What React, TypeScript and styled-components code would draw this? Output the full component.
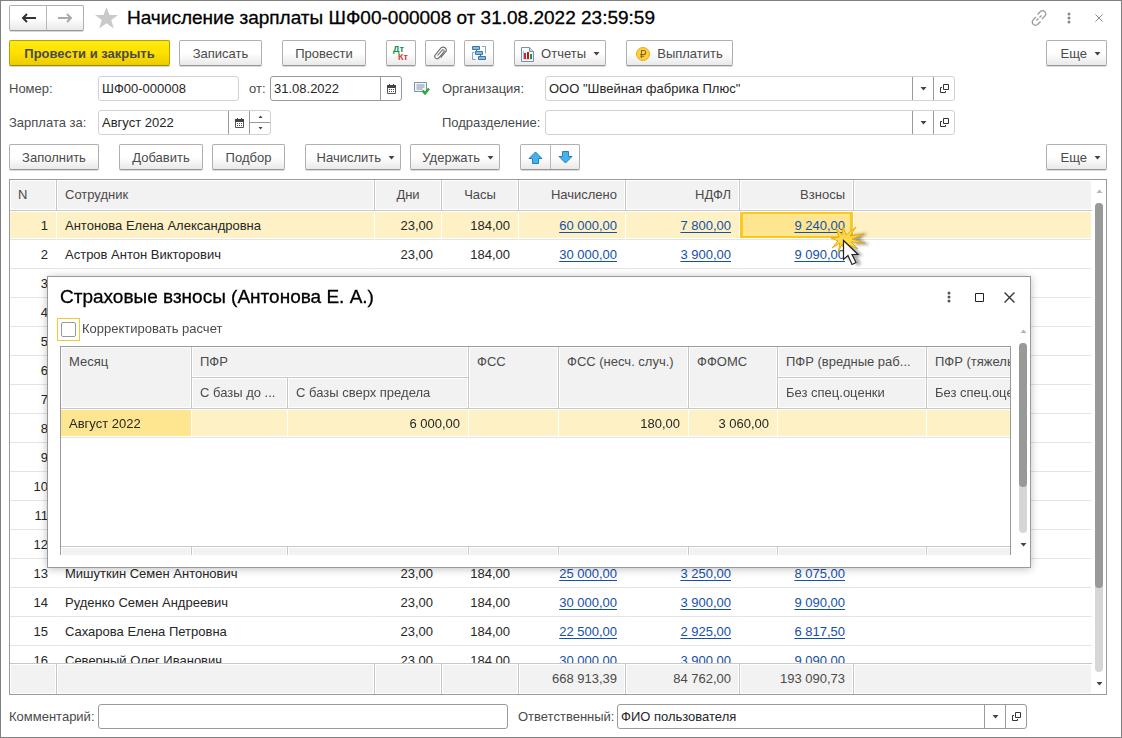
import React from "react";
import styled, { createGlobalStyle, css } from "styled-components";

const Global = createGlobalStyle`
  *, *::before, *::after { box-sizing: border-box; }
  body { margin: 0; background: #fff; }
  body, button, input, table { font-family: "Liberation Sans", Arial, sans-serif; font-size: 13px; line-height: 16px; color: #4a4a4a; }
`;

const Window = styled.main`
  position: relative;
  display: flex;
  flex-direction: column;
  height: 100vh;
  min-height: 600px;
  padding: 4px 14px 8px 8px;
  border: 1px solid #808080;
  background: #fff;
`;

const TitleBar = styled.header`
  display: flex;
  align-items: center;
  height: 26px;
  margin-right: -7px;
`;

const buttonFace = css`
  border: 1px solid #b0b0b0;
  border-bottom-color: #989898;
  border-radius: 2px;
  background: linear-gradient(#fff, #fff 50%, #e9e9e9);
  box-shadow: 0 1px 0 #d8d8d8;
`;

const ButtonGroup = styled.div<{ $gap?: boolean }>`
  ${buttonFace}
  display: flex;
  flex: none;
  height: 26px;
  overflow: hidden;
  margin-left: ${(p) => (p.$gap ? "11px" : "0")};
`;

const GroupButton = styled.button<{ $w: number }>`
  display: flex;
  align-items: center;
  justify-content: center;
  width: ${(p) => p.$w}px;
  padding: 0;
  border: 0;
  background: none;
  & + & { border-left: 1px solid #b8b8b8; }
`;

const Title = styled.h1`
  flex: 1;
  margin: 0;
  font-size: 19px;
  line-height: 24px;
  font-weight: 400;
  color: #000;
  -webkit-text-stroke: 0.3px #000;
  white-space: nowrap;
`;

const StarButton = styled.button`
  display: flex;
  padding: 0;
  margin: 0 9px 0 11px;
  border: 0;
  background: none;
`;

const Tools = styled.div`
  display: flex;
  align-items: center;
`;

const ToolButton = styled.button`
  display: flex;
  align-items: center;
  justify-content: center;
  width: 30px;
  height: 24px;
  padding: 0;
  border: 0;
  background: none;
`;

const Toolbar = styled.div`
  display: flex;
  gap: 9px;
  height: 27px;
  flex: none;
  margin-top: 9px;
`;

const Button = styled.button<{ $w: number; $primary?: boolean; $gap?: boolean; $end?: boolean; $menu?: boolean }>`
  ${buttonFace}
  display: flex;
  align-items: center;
  justify-content: ${(p) => (p.$menu ? "flex-end" : "center")};
  gap: 7px;
  flex: none;
  width: ${(p) => p.$w}px;
  height: 26px;
  padding: ${(p) => (p.$menu ? "2px 5px 0 0" : "2px 0 0")};
  white-space: nowrap;
  margin-left: ${(p) => (p.$end ? "auto" : p.$gap ? "11px" : "0")};
  ${(p) =>
    p.$primary &&
    css`
      font-weight: 700;
      border-color: #b8a000;
      border-bottom-color: #a08a00;
      background: linear-gradient(#ffea10, #ffe000 50%, #ebcc00);
    `}
`;

const IconButton = styled(Button)`
  padding: 0;
`;

const Form = styled.div`
  display: grid;
  grid-template-columns: 89px 304px 40px 103px minmax(200px, 410px);
  grid-auto-rows: 25px;
  row-gap: 9px;
  align-items: center;
  margin-top: 9px;
`;

const Label = styled.label<{ $col?: number }>`
  white-space: nowrap;
  ${(p) => p.$col && `grid-column: ${p.$col};`}
`;

const Group = styled.div<{ $center?: boolean }>`
  display: flex;
  align-items: center;
  justify-content: ${(p) => (p.$center ? "center" : "flex-start")};
`;

const Field = styled.div<{ $w?: number; $dark?: boolean }>`
  display: flex;
  height: 25px;
  ${(p) => (p.$w ? `flex: 0 1 ${p.$w}px; width: ${p.$w}px;` : "")}
  min-width: 0;
  border: 1px solid ${(p) => (p.$dark ? "#9a9a9a" : "#d2d2d2")};
  border-radius: 3px;
  background: #fff;
`;

const Input = styled.input`
  flex: 1;
  min-width: 0;
  width: 100%;
  padding: 0 3px;
  border: 0;
  outline: 0;
  background: none;
  color: #262626;
`;

const FieldButton = styled.button`
  display: flex;
  align-items: center;
  justify-content: center;
  flex: none;
  width: 21px;
  padding: 0;
  border: 0;
  border-left: 1px solid #9a9a9a;
  background: none;
`;

const Spinner = styled.div`
  display: flex;
  flex-direction: column;
  flex: none;
  width: 21px;
  border-left: 1px solid #9a9a9a;
`;

const SpinButton = styled.button`
  display: flex;
  align-items: center;
  justify-content: center;
  flex: 1;
  padding: 0;
  border: 0;
  background: none;
  & + & { border-top: 1px solid #9a9a9a; }
`;

const Grid = styled.section`
  display: flex;
  flex: 1;
  min-height: 0;
  margin-top: 8px;
  border: 1px solid #9a9a9a;
`;

const GridView = styled.div`
  flex: 1;
  min-width: 0;
  overflow: hidden;
`;

const Table = styled.table`
  width: 100%;
  border-collapse: separate;
  border-spacing: 0;
  table-layout: fixed;
  thead { position: sticky; top: 0; z-index: 1; }
  tfoot { position: sticky; bottom: 0; z-index: 1; }
`;

const Col = styled.col<{ $w?: number }>`
  ${(p) => p.$w && `width: ${p.$w}px;`}
`;

type CellProps = { $align?: "left" | "right" | "center" };

const panel = css<CellProps>`
  padding: 0 8px;
  overflow: hidden;
  white-space: nowrap;
  text-align: ${(p) => p.$align ?? "left"};
  font-weight: 400;
  color: #4a4a4a;
  background: #f2f2f2;
  border-right: 1px solid #c8c8c8;
  box-shadow: inset 0 0 0 1px #fff;
  &:last-child { border-right: 0; }
`;

const HeadCell = styled.th<CellProps & { $top?: boolean }>`
  ${panel}
  height: 31px;
  border-bottom: 1px solid #c8c8c8;
  ${(p) => p.$top && "vertical-align: top; padding-top: 7px;"}
`;

const FootCell = styled.td<CellProps>`
  ${panel}
  height: 31px;
  border-top: 1px solid #c8c8c8;
`;

const Row = styled.tr<{ $selected?: boolean }>`
  td {
    background: ${(p) => (p.$selected ? "#fdf1c5" : "#fff")};
    box-shadow: inset 0 1px #fff, inset 0 -1px #fff;
  }
`;

const Cell = styled.td<CellProps>`
  height: 29px;
  padding: 2px 8px 0;
  color: #262626;
  white-space: nowrap;
  text-align: ${(p) => p.$align ?? "left"};
  border-right: 1px solid #fff;
  border-bottom: 1px solid #e4e4e4;
`;

const ActiveCell = styled(Cell)`
  position: relative;
  && {
    background: #fee590;
    box-shadow: inset 0 1px #fff, inset 0 -1px #fff, inset 0 0 0 3px #fbc81e;
  }
`;

const MonthCell = styled(Cell)`
  && { background: #fee590; }
`;

const Link = styled.a`
  color: #1450aa;
  text-decoration: underline;
  text-underline-offset: 2px;
`;

const Pointer = styled.svg`
  position: absolute;
  left: 80px;
  top: 4px;
  z-index: 1;
  pointer-events: none;
`;

const ScrollBar = styled.div`
  display: flex;
  flex-direction: column;
  align-items: center;
  flex: none;
  width: 14px;
  padding: 9px 0 8px;
  gap: 10px;
`;

const Track = styled.div`
  flex: 1;
  width: 8px;
  border-radius: 4px;
  background: #d6d6d6;
`;

const Thumb = styled.div<{ $h: number }>`
  width: 8px;
  height: ${(p) => p.$h}%;
  border-radius: 4px;
  background: #999;
`;

const Footer = styled.footer`
  display: flex;
  align-items: center;
  margin-top: 9px;
`;

const SideLabel = styled(Label)<{ $w: number; $pad?: number }>`
  flex: none;
  width: ${(p) => p.$w}px;
  padding-left: ${(p) => p.$pad ?? 0}px;
`;

const Dialog = styled.section`
  position: absolute;
  z-index: 2;
  left: 46px;
  right: 90px;
  top: 275px;
  padding: 8px 0 12px 12px;
  border: 1px solid #999;
  background: #fff;
  box-shadow: 0 1px 8px rgba(0, 0, 0, 0.25);
`;

const DialogHead = styled.header`
  display: flex;
  align-items: center;
  padding-right: 6px;
`;

const DialogTitle = styled(Title).attrs({ as: "h2" })``;

const DialogMain = styled.div`
  display: flex;
  gap: 5px;
`;

const DialogContent = styled.div`
  flex: 1;
  min-width: 0;
`;

const CheckLabel = styled.label`
  display: flex;
  align-items: center;
  gap: 2px;
  height: 24px;
  margin: 8px 0 5px -3px;
`;

const FocusFrame = styled.span`
  display: flex;
  padding: 3px;
  border: 1px solid #f4c92c;
`;

const Checkbox = styled.input`
  appearance: none;
  width: 15px;
  height: 15px;
  margin: 0;
  border: 1px solid #999;
  border-radius: 2px;
`;

const DialogGrid = styled.div`
  height: 209px;
  overflow: hidden;
  border: 1px solid #9a9a9a;
  border-bottom: 0;
  table { width: 1014px; }
`;

const Spacer = styled.td`
  height: 108px;
`;

const DialogScroll = styled(ScrollBar)`
  padding: 20px 0 8px;
`;

const Caret = ({ up, light }: { up?: boolean; light?: boolean }) => (
  <svg width="7" height="4" viewBox="0 0 7 4" aria-hidden="true">
    <path d={up ? "M.5 4L3.5.5 6.5 4z" : "M.5 0L3.5 3.5 6.5 0z"} fill={light ? "#b5b5b5" : "#444"} />
  </svg>
);

const SmallCaret = ({ up }: { up?: boolean }) => (
  <svg width="5" height="3" viewBox="0 0 5 3" aria-hidden="true">
    <path d={up ? "M.5 3L2.5.5 4.5 3z" : "M.5 0L2.5 2.5 4.5 0z"} fill="#444" />
  </svg>
);

const Arrow = ({ right }: { right?: boolean }) => (
  <svg width="15" height="12" viewBox="0 0 15 12" aria-hidden="true">
    <path
      d={right ? "M0 6h12.5M9 2l4 4-4 4" : "M15 6H2.5M6 2L2 6l4 4"}
      fill="none"
      stroke={right ? "#aaa" : "#333"}
      strokeWidth="2"
    />
  </svg>
);

const Star = () => (
  <svg width="23" height="22" viewBox="0 0 23 22" aria-hidden="true">
    <path d="M11.5 0l3 8H23l-6.8 5 2.6 8.500-7.300-5.200-7.300 5.200L6.800 13 0 8h8.500z" fill="#c9c9c9" />
  </svg>
);

const Chain = () => (
  <svg width="16" height="16" viewBox="0 0 16 16" fill="none" stroke="#999" strokeWidth="1.3" aria-hidden="true">
    <path d="M6.500 4.500l2.700-2.700a2.900 2.900 0 0 1 4.600 0 2.900 2.900 0 0 1 0 4.300L11 9M9.500 11.500l-2.700 2.700a2.900 2.900 0 0 1-4.600 0 2.900 2.900 0 0 1 0-4.300L5 7M5.500 10.500l2-2M8.500 7.500l2-2" />
  </svg>
);

const Dots = ({ dark }: { dark?: boolean }) => (
  <svg width="4" height="12" viewBox="0 0 4 12" fill={dark ? "#555" : "#888"} aria-hidden="true">
    <circle cx="2" cy="2" r="1.500" />
    <circle cx="2" cy="6" r="1.500" />
    <circle cx="2" cy="10" r="1.500" />
  </svg>
);

const Cross = ({ size, color }: { size: number; color: string }) => (
  <svg width={size} height={size} viewBox="0 0 10 10" stroke={color} strokeWidth="1.2" aria-hidden="true">
    <path d="M.5.5l9 9M9.5.5l-9 9" />
  </svg>
);

const Square = () => (
  <svg width="9" height="9" viewBox="0 0 9 9" aria-hidden="true">
    <path d="M.5.5h8v8h-8z" fill="none" stroke="#222" strokeWidth="1" />
  </svg>
);

const DtKt = () => (
  <svg width="18" height="18" viewBox="0 0 18 18" fontFamily="Liberation Sans, Arial, sans-serif" fontWeight="700" aria-hidden="true">
    <text x="1" y="8" fontSize="9" fill="#0d9048">Дт</text>
    <text x="6" y="16" fontSize="9" fill="#d83a3a">Кт</text>
  </svg>
);

const Clip = () => (
  <svg width="14" height="14" viewBox="0 0 14 14" fill="none" stroke="#6b6b6b" strokeWidth="1.1" aria-hidden="true">
    <path d="M4.500 9.500l4.500-5.200a1.200 1.200 0 0 1 1.900 1.600l-5 5.900a2.300 2.300 0 0 1-3.600-3L7.800 2.200a2.900 2.900 0 0 1 4.700 3.800l-4.800 5.700" />
  </svg>
);

const Structure = () => (
  <svg width="16" height="16" viewBox="0 0 16 16" aria-hidden="true">
    <path d="M3.500 7.500h-2v7h3M11 1.500h3.500v7" fill="none" stroke="#7fa6c6" />
    <path d="M5.500 4.500v2M9.500 9.500v2" stroke="#3a76a8" />
    <path d="M1.500 1.500h7v3h-7zM4.500 6.500h7v3h-7zM7.500 11.500h7v3h-7z" fill="#8db9dc" stroke="#3a76a8" />
  </svg>
);

const Report = () => (
  <svg width="13" height="15" viewBox="0 0 13 15" aria-hidden="true">
    <path d="M.5.5h8l4 4v10H.5z" fill="#f7fafc" stroke="#7890a4" />
    <path d="M8.500.5v4h4" fill="#cfdbe5" stroke="#7890a4" />
    <path d="M2.500 4v8H11" fill="none" stroke="#b4c2ce" />
    <path d="M3 6h2v6H3z" fill="#e02020" />
    <path d="M6 5h2v7H6z" fill="#c01818" />
    <path d="M9 7h2v5H9z" fill="#169a48" />
  </svg>
);

const Coin = () => (
  <svg width="14" height="14" viewBox="0 0 14 14" aria-hidden="true">
    <circle cx="7" cy="7" r="6.500" fill="#fdd040" stroke="#eba913" />
    <path d="M5.500 11V3.500h2.200a2 2 0 0 1 0 4H4.200M4.200 9.300h4" fill="none" stroke="#8f6413" strokeWidth="1.100" />
  </svg>
);

const Calendar = () => (
  <svg width="9" height="10" viewBox="0 0 9 10" aria-hidden="true">
    <path d="M.5 1.500h8v8h-8z" fill="none" stroke="#555" />
    <path d="M0 1h9v3H0zM2 0h1v2H2zM6 0h1v2H6z" fill="#444" />
    <path d="M2 5.500h5M2 7.500h5" stroke="#444" strokeDasharray="1 1" />
  </svg>
);

const Open = () => (
  <svg width="9" height="9" viewBox="0 0 9 9" fill="none" stroke="#333" aria-hidden="true">
    <path d="M3.500.5h5v5h-5zM2 3.500H.5v5h5V7" />
  </svg>
);

const ListCheck = () => (
  <svg width="16" height="13" viewBox="0 0 16 13" aria-hidden="true">
    <path d="M.5.5h12v9H.5z" fill="#f3f7fa" stroke="#7e93a5" />
    <path d="M2.500 3h8M2.500 5h8M2.500 7h6" stroke="#7e93a5" />
    <path d="M8.500 8.500l2.500 3L15 6.500" fill="none" stroke="#2cab3a" strokeWidth="2.400" />
  </svg>
);

const BlueArrow = ({ down }: { down?: boolean }) => (
  <svg width="15" height="13" viewBox="0 0 15 13" aria-hidden="true">
    <path
      d={down ? "M4.500.5h6v5h3.500L7.500 12 1 5.500h3.500z" : "M4.500 12.500h6v-5H14L7.500 1 1 7.500h3.500z"}
      fill="#45b2ee"
      stroke="#2c7fb4"
    />
  </svg>
);

type Person = { name?: string; days?: string; hours?: string; paid?: string; tax?: string; fees?: string };

const blank: Person[] = Array.from({ length: 10 }, () => ({}));

const people: Person[] = [
  { name: "Антонова Елена Александровна", days: "23,00", hours: "184,00", paid: "60 000,00", tax: "7 800,00", fees: "9 240,00" },
  { name: "Астров Антон Викторович", days: "23,00", hours: "184,00", paid: "30 000,00", tax: "3 900,00", fees: "9 090,00" },
  ...blank,
  { name: "Мишуткин Семен Антонович", days: "23,00", hours: "184,00", paid: "25 000,00", tax: "3 250,00", fees: "8 075,00" },
  { name: "Руденко Семен Андреевич", days: "23,00", hours: "184,00", paid: "30 000,00", tax: "3 900,00", fees: "9 090,00" },
  { name: "Сахарова Елена Петровна", days: "23,00", hours: "184,00", paid: "22 500,00", tax: "2 925,00", fees: "6 817,50" },
  { name: "Северный Олег Иванович", days: "23,00", hours: "184,00", paid: "30 000,00", tax: "3 900,00", fees: "9 090,00" },
];

const MoneyLink = ({ value }: { value?: string }) => (value ? <Link href="#">{value}</Link> : null);

const ClickPointer = () => (
  <Pointer width="60" height="60" viewBox="0 0 60 60" aria-hidden="true">
    <defs>
      <filter id="soft" x="-40%" y="-40%" width="180%" height="180%">
        <feGaussianBlur stdDeviation="1.800" />
      </filter>
    </defs>
    <path d="M28 26v20l5-4 4 9 4-2-4-8h6zM30 20l18-2-8 6 10 6-14 0z" fill="#000" opacity=".35" filter="url(#soft)" />
    <path
      d="M23 12l3 8 10-8-6 9 14-2-12 5 13 4-14-1 7 7-11-5-3 5-2-5-4 9 2-10-8 5 6-7-7-3 8-1-3-9 6 7z"
      fill="#ffd94a"
      stroke="#e3a90c"
    />
    <path d="M23.500 25.500v19l4.500-4 4 9 4-2-4-8h6z" fill="#fff" stroke="#222" strokeWidth="1.200" />
  </Pointer>
);

export default function App() {
  return (
    <Window>
      <Global />
      <TitleBar>
        <ButtonGroup>
          <GroupButton $w={36} aria-label="Назад"><Arrow /></GroupButton>
          <GroupButton $w={37} aria-label="Вперед"><Arrow right /></GroupButton>
        </ButtonGroup>
        <StarButton aria-label="Избранное"><Star /></StarButton>
        <Title>Начисление зарплаты ШФ00-000008 от 31.08.2022 23:59:59</Title>
        <Tools>
          <ToolButton aria-label="Ссылка"><Chain /></ToolButton>
          <ToolButton aria-label="Меню"><Dots /></ToolButton>
          <ToolButton aria-label="Закрыть"><Cross size={8} color="#888" /></ToolButton>
        </Tools>
      </TitleBar>

      <Toolbar>
        <Button $w={161} $primary>Провести и закрыть</Button>
        <Button $w={83}>Записать</Button>
        <Button $w={84} $gap>Провести</Button>
        <IconButton $w={30} $gap aria-label="Проводки"><DtKt /></IconButton>
        <IconButton $w={30} aria-label="Файлы"><Clip /></IconButton>
        <IconButton $w={30} aria-label="Структура"><Structure /></IconButton>
        <Button $w={92} $gap $menu><Report />Отчеты<Caret /></Button>
        <Button $w={107} $gap><Coin />Выплатить</Button>
        <Button $w={61} $end $menu>Еще<Caret /></Button>
      </Toolbar>

      <Form>
        <Label htmlFor="number">Номер:</Label>
        <Group>
          <Field $w={141}><Input id="number" defaultValue="ШФ00-000008" /></Field>
          <SideLabel $w={31} $pad={10} htmlFor="date">от:</SideLabel>
          <Field $w={132} $dark>
            <Input id="date" defaultValue="31.08.2022" />
            <FieldButton aria-label="Календарь"><Calendar /></FieldButton>
          </Field>
        </Group>
        <Group $center><ToolButton aria-label="Проведен"><ListCheck /></ToolButton></Group>
        <Label htmlFor="org">Организация:</Label>
        <Field>
          <Input id="org" defaultValue={'ООО "Швейная фабрика Плюс"'} />
          <FieldButton aria-label="Выбрать"><Caret /></FieldButton>
          <FieldButton aria-label="Открыть"><Open /></FieldButton>
        </Field>
        <Label htmlFor="month">Зарплата за:</Label>
        <Group>
          <Field $w={173}>
            <Input id="month" defaultValue="Август 2022" />
            <FieldButton aria-label="Календарь"><Calendar /></FieldButton>
            <Spinner>
              <SpinButton aria-label="Больше"><SmallCaret up /></SpinButton>
              <SpinButton aria-label="Меньше"><SmallCaret /></SpinButton>
            </Spinner>
          </Field>
        </Group>
        <Label $col={4} htmlFor="dept">Подразделение:</Label>
        <Field>
          <Input id="dept" />
          <FieldButton aria-label="Выбрать"><Caret /></FieldButton>
          <FieldButton aria-label="Открыть"><Open /></FieldButton>
        </Field>
      </Form>

      <Toolbar>
        <Button $w={90}>Заполнить</Button>
        <Button $w={84} $gap>Добавить</Button>
        <Button $w={73}>Подбор</Button>
        <Button $w={96} $gap $menu>Начислить<Caret /></Button>
        <Button $w={90} $menu>Удержать<Caret /></Button>
        <ButtonGroup $gap>
          <GroupButton $w={29} aria-label="Вверх"><BlueArrow /></GroupButton>
          <GroupButton $w={29} aria-label="Вниз"><BlueArrow down /></GroupButton>
        </ButtonGroup>
        <Button $w={61} $end $menu>Еще<Caret /></Button>
      </Toolbar>

      <Grid>
        <GridView>
          <Table>
            <colgroup>
              <Col $w={47} /><Col $w={318} /><Col $w={67} /><Col $w={77} />
              <Col $w={107} /><Col $w={114} /><Col $w={114} /><Col />
            </colgroup>
            <thead>
              <tr>
                <HeadCell>N</HeadCell>
                <HeadCell>Сотрудник</HeadCell>
                <HeadCell $align="center">Дни</HeadCell>
                <HeadCell $align="center">Часы</HeadCell>
                <HeadCell $align="right">Начислено</HeadCell>
                <HeadCell $align="right">НДФЛ</HeadCell>
                <HeadCell $align="right">Взносы</HeadCell>
                <HeadCell />
              </tr>
            </thead>
            <tbody>
              {people.map((p, i) => (
                <Row key={i} $selected={i === 0}>
                  <Cell $align="right">{i + 1}</Cell>
                  <Cell>{p.name}</Cell>
                  <Cell $align="right">{p.days}</Cell>
                  <Cell $align="right">{p.hours}</Cell>
                  <Cell $align="right"><MoneyLink value={p.paid} /></Cell>
                  <Cell $align="right"><MoneyLink value={p.tax} /></Cell>
                  {i === 0 ? (
                    <ActiveCell $align="right"><MoneyLink value={p.fees} /><ClickPointer /></ActiveCell>
                  ) : (
                    <Cell $align="right"><MoneyLink value={p.fees} /></Cell>
                  )}
                  <Cell />
                </Row>
              ))}
            </tbody>
            <tfoot>
              <tr>
                <FootCell /><FootCell /><FootCell /><FootCell />
                <FootCell $align="right">668 913,39</FootCell>
                <FootCell $align="right">84 762,00</FootCell>
                <FootCell $align="right">193 090,73</FootCell>
                <FootCell />
              </tr>
            </tfoot>
          </Table>
        </GridView>
        <ScrollBar>
          <Caret up light />
          <Track><Thumb $h={82} /></Track>
          <Caret />
        </ScrollBar>
      </Grid>

      <Footer>
        <SideLabel $w={89} htmlFor="comment">Комментарий:</SideLabel>
        <Field $w={410} $dark><Input id="comment" /></Field>
        <SideLabel $w={109} $pad={10} htmlFor="owner">Ответственный:</SideLabel>
        <Field $w={410} $dark>
          <Input id="owner" defaultValue="ФИО пользователя" />
          <FieldButton aria-label="Выбрать"><Caret /></FieldButton>
          <FieldButton aria-label="Открыть"><Open /></FieldButton>
        </Field>
      </Footer>

      <Dialog role="dialog" aria-labelledby="dialog-title">
        <DialogHead>
          <DialogTitle id="dialog-title">Страховые взносы (Антонова Е. А.)</DialogTitle>
          <Tools>
            <ToolButton aria-label="Меню"><Dots dark /></ToolButton>
            <ToolButton aria-label="Развернуть"><Square /></ToolButton>
            <ToolButton aria-label="Закрыть"><Cross size={11} color="#333" /></ToolButton>
          </Tools>
        </DialogHead>
        <DialogMain>
          <DialogContent>
            <CheckLabel>
              <FocusFrame><Checkbox type="checkbox" /></FocusFrame>
              Корректировать расчет
            </CheckLabel>
            <DialogGrid>
              <Table>
                <colgroup>
                  <Col $w={131} /><Col $w={96} /><Col $w={181} /><Col $w={90} />
                  <Col $w={130} /><Col $w={89} /><Col $w={149} /><Col />
                </colgroup>
                <thead>
                  <tr>
                    <HeadCell rowSpan={2} $top>Месяц</HeadCell>
                    <HeadCell colSpan={2}>ПФР</HeadCell>
                    <HeadCell rowSpan={2} $top>ФСС</HeadCell>
                    <HeadCell rowSpan={2} $top>ФСС (несч. случ.)</HeadCell>
                    <HeadCell rowSpan={2} $top>ФФОМС</HeadCell>
                    <HeadCell>ПФР (вредные раб...</HeadCell>
                    <HeadCell>ПФР (тяжелые раб...</HeadCell>
                  </tr>
                  <tr>
                    <HeadCell>С базы до ...</HeadCell>
                    <HeadCell>С базы сверх предела</HeadCell>
                    <HeadCell>Без спец.оценки</HeadCell>
                    <HeadCell>Без спец.оценки</HeadCell>
                  </tr>
                </thead>
                <tbody>
                  <Row $selected>
                    <MonthCell>Август 2022</MonthCell>
                    <Cell />
                    <Cell $align="right">6 000,00</Cell>
                    <Cell />
                    <Cell $align="right">180,00</Cell>
                    <Cell $align="right">3 060,00</Cell>
                    <Cell />
                    <Cell />
                  </Row>
                  <tr><Spacer colSpan={8} /></tr>
                </tbody>
                <tbody>
                  <tr>
                    {Array.from({ length: 8 }, (_, i) => <FootCell key={i} />)}
                  </tr>
                </tbody>
              </Table>
            </DialogGrid>
          </DialogContent>
          <DialogScroll>
            <Caret up light />
            <Track><Thumb $h={76} /></Track>
            <Caret />
          </DialogScroll>
        </DialogMain>
      </Dialog>
    </Window>
  );
}
